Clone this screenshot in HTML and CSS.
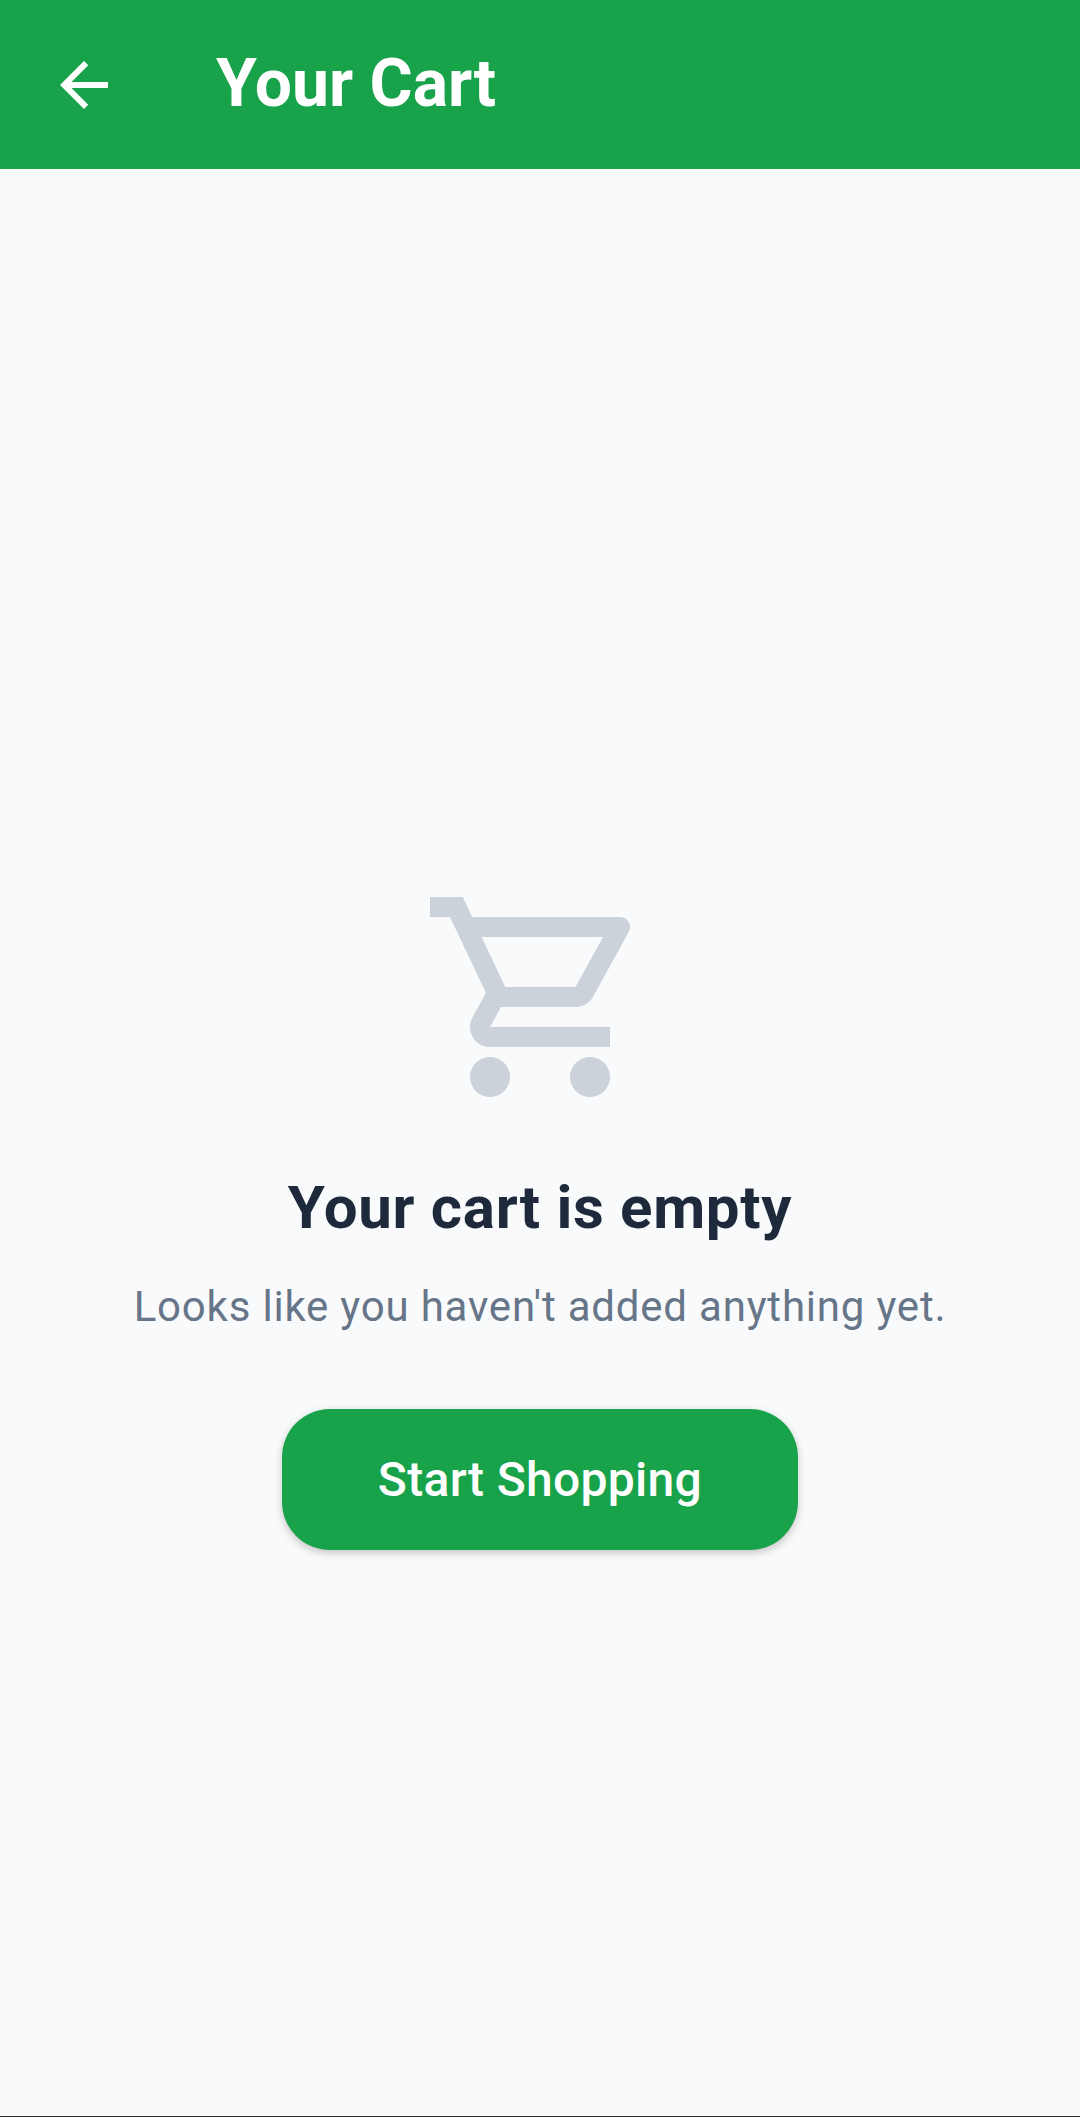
FILE: index.html
```html
<!DOCTYPE html>
<html lang="en">
<head>
<meta charset="utf-8">
<title>Your Cart</title>
<link rel="stylesheet" href="styles.css">
</head>
<body>
<div class="screen">
  <header class="app-bar">
    <svg class="back-icon" viewBox="0 0 24 24" aria-hidden="true"><path d="M20 11H7.83l5.59-5.59L12 4l-8 8 8 8 1.41-1.41L7.83 13H20v-2z"/></svg>
    <h1 class="app-title">Your Cart</h1>
  </header>
  <main class="empty">
    <svg class="cart-icon" viewBox="0 0 24 24" aria-hidden="true"><path d="M15.55 13c.75 0 1.41-.41 1.75-1.03l3.58-6.49c.37-.66-.11-1.48-.87-1.48H5.21l-.94-2H1v2h2l3.6 7.59-1.35 2.44C4.52 15.37 5.48 17 7 17h12v-2H7l1.1-2h7.45zM6.16 6h12.15l-2.76 5H8.53L6.16 6zM7 18c-1.1 0-1.99.9-1.99 2S5.9 22 7 22s2-.9 2-2-.9-2-2-2zm10 0c-1.1 0-1.99.9-1.99 2s.89 2 1.99 2 2-.9 2-2-.9-2-2-2z"/></svg>
    <h2 class="empty-title">Your cart is empty</h2>
    <p class="empty-text">Looks like you haven't added anything yet.</p>
    <button class="shop-button" type="button">Start Shopping</button>
  </main>
  <div class="bottom-line"></div>
</div>
</body>
</html>
```

FILE: styles.css
```css
* { box-sizing: border-box; }
html, body { margin: 0; padding: 0; }
body { font-family: Roboto, "Liberation Sans", sans-serif; background: #f9fafc; }
.screen { width: 1080px; height: 2117px; display: flex; flex-direction: column; overflow: hidden; }
.app-bar { height: 169px; flex: none; background: #18a34a; display: flex; align-items: center; padding-left: 48px; }
.back-icon { width: 72px; height: 72px; fill: #fff; flex: none; }
.app-title { margin: -3px 0 0 96px; font-size: 66px; line-height: 77px; font-weight: 700; color: #fff; }
.empty { flex: 1; display: flex; flex-direction: column; align-items: center; padding-top: 708px; }
.cart-icon { width: 240px; height: 240px; fill: #cbd2da; flex: none; }
.empty-title { margin: 56px 0 0; font-size: 60px; line-height: 70px; font-weight: 700; letter-spacing: .7px; color: #1e293b; }
.empty-text { margin: 39px 0 0; font-size: 42px; line-height: 50px; letter-spacing: .8px; color: #667587; }
.shop-button { margin-top: 77px; width: 516px; height: 141px; border: 0; border-radius: 48px; background: #18a34a; color: #fff; font-family: inherit; font-size: 48px; font-weight: 500; letter-spacing: .3px; box-shadow: 0 3px 9px rgba(0,0,0,.22); }
.bottom-line { height: 1px; flex: none; background: #2b2b2b; }
```
